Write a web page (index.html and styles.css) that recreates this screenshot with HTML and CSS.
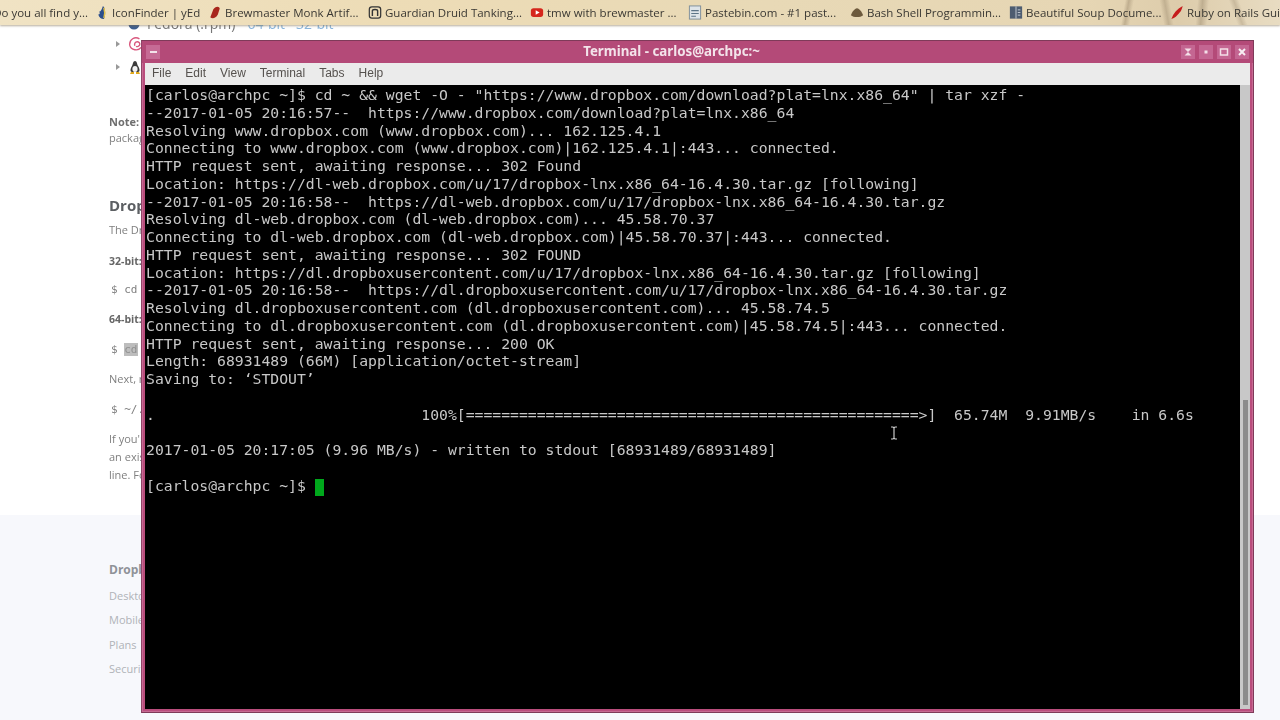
FILE: index.html
```html
<!DOCTYPE html>
<html lang="en">
<head>
<meta charset="utf-8">
<title>Terminal - carlos@archpc:~</title>
<link rel="stylesheet" href="styles.css">
</head>
<body>
<nav class="bookmarks">
  <span class="bm bm-first">Do you all find y...</span>
  <span class="bm bm-icon"><svg class="ico" viewBox="0 0 12 16"><path d="M7 1 C10 3 10 12 8 15 C5 15 3 13 2 10 C4 10 4 9 3 7 C5 7 6 4 7 1Z" fill="#2c4f8c"/><path d="M8 3 C9 6 9 11 8 14" stroke="#e6c44a" stroke-width="1.5" fill="none"/></svg>IconFinder | yEd</span>
  <span class="bm bm-brew"><svg class="ico" viewBox="0 0 14 16"><path d="M2 13 L5 5 C7 1 12 1 12 4 L10 10 C8 14 4 15 2 13Z" fill="#a8261c"/></svg>Brewmaster Monk Artif...</span>
  <span class="bm bm-guard"><svg class="ico" viewBox="0 0 16 16"><rect x="1.5" y="1.5" width="13" height="13" rx="3" fill="none" stroke="#333" stroke-width="1.4"/><path d="M5 12 V6 C5 4 11 4 11 6 V12" fill="none" stroke="#333" stroke-width="1.6"/></svg>Guardian Druid Tanking...</span>
  <span class="bm bm-tmw"><svg class="ico" viewBox="0 0 16 16"><rect x="1" y="3" width="14" height="10" rx="3" fill="#d5261c"/><path d="M6.5 5.5 L11 8 L6.5 10.5Z" fill="#fff"/></svg>tmw with brewmaster ...</span>
  <span class="bm bm-paste"><svg class="ico" viewBox="0 0 14 16"><rect x="1" y="1" width="12" height="14" fill="#dfe5e8" stroke="#7d8d99"/><path d="M3 6 H11 M3 9 H11 M3 12 H8" stroke="#5c7486" stroke-width="1.2"/></svg>Pastebin.com - #1 past...</span>
  <span class="bm bm-bash"><svg class="ico" viewBox="0 0 16 16"><path d="M1 11 C3 6 5 4 8 3 C11 4 13 6 15 11 C12 14 4 14 1 11Z" fill="#6d5a3d"/></svg>Bash Shell Programmin...</span>
  <span class="bm bm-soup"><svg class="ico" viewBox="0 0 16 16"><rect x="1" y="1" width="14" height="14" fill="#4d5c70"/><path d="M8 1 V15" stroke="#cfd5dc"/><path d="M10 5 H13 M10 8 H13 M10 11 H13" stroke="#cfd5dc"/></svg>Beautiful Soup Docume...</span>
  <span class="bm bm-ruby"><svg class="ico" viewBox="0 0 14 16"><path d="M1 15 C3 9 7 4 13 1 C12 6 10 8 9 9 C7 11 5 14 1 15Z" fill="#c51c1c"/></svg>Ruby on Rails Guides</span>
</nav>

<main class="page">
  <div class="article">
    <div class="distro distro-fedora"><svg class="fed-ico" viewBox="0 0 12 12"><circle cx="6" cy="6" r="5.5" fill="#3f5f8f"/></svg><span class="fedora">Fedora (.rpm)</span> <span class="links">64-bit · 32-bit</span></div>
    <div class="tree-row tree-debian"><span class="caret"></span><svg class="swirl" viewBox="0 0 14 14"><path d="M10 2.5 C6 0 1 3 1.5 8 C2.5 12.5 9 13.5 11.5 10 M6 8.5 C5 5.5 8 4 10 6 C11 8 9 10 7 9" fill="none" stroke="#d9587e" stroke-width="1.2"/></svg></div>
    <div class="tree-row tree-linux"><span class="caret"></span><svg class="tux" viewBox="0 0 12 14"><path d="M6 1 C8 1 8 4 9 6 C11 9 11 12 9 12 H3 C1 12 1 9 3 6 C4 4 4 1 6 1Z" fill="#3a3a3a"/><ellipse cx="6" cy="9" rx="2.6" ry="3" fill="#f2f2f2"/><path d="M2 12 H5 V14 H1Z M7 12 H10 L11 14 H7Z" fill="#e0a91c"/></svg></div>
    <p class="note"><b>Note:</b> Updates for the</p>
    <p class="note-2">packages are not</p>
    <h2 class="heading">Dropbox Headless</h2>
    <p class="t t-intro">The Dropbox daemon</p>
    <p class="t t-bit"><b>32-bit:</b></p>
    <p class="t code t-cd">$ cd ~ &amp;&amp; wget</p>
    <p class="t t-bit2"><b>64-bit:</b></p>
    <p class="t code t-cd2">$ <span class="sel">cd</span> ~ &amp;&amp; wget</p>
    <p class="t t-next">Next, run</p>
    <p class="t code t-run">$ ~/.dropbox</p>
    <p class="t t-if">If you're running</p>
    <p class="t t-line">an existing account</p>
    <p class="t t-line">line. Follow</p>
  </div>
  <footer class="foot">
    <h3 class="foot-h">Dropbox</h3>
    <ul class="foot-list">
      <li>Desktop app</li>
      <li>Mobile apps</li>
      <li>Plans</li>
      <li>Security</li>
    </ul>
  </footer>
</main>

<section class="window">
  <header class="titlebar">
    <span class="btn btn-min"><i class="dash"></i></span>
    <span class="title">Terminal - carlos@archpc:~</span>
    <span class="wbtns">
      <span class="btn"><svg viewBox="0 0 10 10"><path d="M1.5 1.5 H8.5 L5 5 L8.5 8.5 H1.5 L5 5Z" fill="#f3dfe8"/></svg></span>
      <span class="btn"><svg viewBox="0 0 10 10"><rect x="3.5" y="3.5" width="3" height="3" fill="#f3dfe8"/></svg></span>
      <span class="btn"><svg viewBox="0 0 10 10"><rect x="1.5" y="2" width="7" height="6" fill="none" stroke="#f3dfe8" stroke-width="1.5"/></svg></span>
      <span class="btn"><svg viewBox="0 0 10 10"><path d="M2 2 L8 8 M8 2 L2 8" stroke="#f8eef3" stroke-width="2"/></svg></span>
    </span>
  </header>
  <div class="menubar">
    <span>File</span><span>Edit</span><span>View</span><span>Terminal</span><span>Tabs</span><span>Help</span>
  </div>
  <div class="termwrap">
<pre class="term">[carlos@archpc ~]$ cd ~ &amp;&amp; wget -O - "https://www.dropbox.com/download?plat=lnx.x86_64" | tar xzf -
--2017-01-05 20:16:57--  https://www.dropbox.com/download?plat=lnx.x86_64
Resolving www.dropbox.com (www.dropbox.com)... 162.125.4.1
Connecting to www.dropbox.com (www.dropbox.com)|162.125.4.1|:443... connected.
HTTP request sent, awaiting response... 302 Found
Location: https://dl-web.dropbox.com/u/17/dropbox-lnx.x86_64-16.4.30.tar.gz [following]
--2017-01-05 20:16:58--  https://dl-web.dropbox.com/u/17/dropbox-lnx.x86_64-16.4.30.tar.gz
Resolving dl-web.dropbox.com (dl-web.dropbox.com)... 45.58.70.37
Connecting to dl-web.dropbox.com (dl-web.dropbox.com)|45.58.70.37|:443... connected.
HTTP request sent, awaiting response... 302 FOUND
Location: https://dl.dropboxusercontent.com/u/17/dropbox-lnx.x86_64-16.4.30.tar.gz [following]
--2017-01-05 20:16:58--  https://dl.dropboxusercontent.com/u/17/dropbox-lnx.x86_64-16.4.30.tar.gz
Resolving dl.dropboxusercontent.com (dl.dropboxusercontent.com)... 45.58.74.5
Connecting to dl.dropboxusercontent.com (dl.dropboxusercontent.com)|45.58.74.5|:443... connected.
HTTP request sent, awaiting response... 200 OK
Length: 68931489 (66M) [application/octet-stream]
Saving to: ‘STDOUT’

.                              100%[===================================================&gt;]  65.74M  9.91MB/s    in 6.6s

2017-01-05 20:17:05 (9.96 MB/s) - written to stdout [68931489/68931489]

[carlos@archpc ~]$ <span class="cursor"> </span></pre>
    <div class="scrollbar"><div class="thumb"></div></div>
    <svg class="ibeam" viewBox="0 0 8 14"><path d="M1 1 H3 L4 2 L5 1 H7 M4 2 V12 M1 13 H3 L4 12 L5 13 H7" fill="none" stroke="#c9c9c9" stroke-width="1.2"/></svg>
  </div>
</section>
</body>
</html>
```

FILE: styles.css
```css
* { box-sizing: border-box; }
html, body { margin: 0; padding: 0; height: 100%; }
body {
  width: 1280px;
  height: 720px;
  overflow: hidden;
  position: relative;
  background: #fff;
  font-family: "Open Sans", "Liberation Sans", sans-serif;
}

/* bookmarks bar */
.bookmarks {
  height: 25px;
  display: flex;
  align-items: center;
  white-space: nowrap;
  overflow: hidden;
  position: relative;
  z-index: 2;
  background:
    linear-gradient(100deg, transparent 87.6%, rgba(140, 122, 95, .4) 87.9%, transparent 88.3%),
    linear-gradient(80deg, transparent 90.6%, rgba(140, 122, 95, .35) 91%, transparent 91.4%),
    linear-gradient(95deg, transparent 93.4%, rgba(140, 122, 95, .4) 93.8%, transparent 94.3%),
    linear-gradient(70deg, transparent 96%, rgba(140, 122, 95, .3) 96.4%, transparent 96.8%),
    linear-gradient(90deg, #f0e3c4 0%, #eddcb6 30%, #e8d9b6 60%, #e6d6b4 85%, #ddccab 92%, #e8dcc2 100%);
  box-shadow: 0 1px 2px rgba(120, 105, 75, .55);
  font-size: 11.5px;
  color: #3a3833;
  filter: blur(.4px);
}
.bm { display: inline-flex; align-items: center; flex: none; }
.ico { width: 14px; height: 15px; margin-right: 3px; flex: none; }
.bm-first { margin-left: -16px; justify-content: flex-end; padding-right: 7px; width: 111px; }
.bm-icon { width: 113px; }
.bm-brew { width: 160px; }
.bm-guard { width: 162px; }
.bm-tmw { width: 158px; }
.bm-paste { width: 162px; }
.bm-bash { width: 159px; }
.bm-soup { width: 161px; }
.bm-ruby { width: 130px; }

/* page behind the window */
.page { height: 695px; display: flex; flex-direction: column; overflow: hidden; filter: blur(.4px); }
.article { height: 490px; padding-left: 109px; color: #7f7f7f; font-size: 11px; position: relative; }
.article p { margin: 0; white-space: nowrap; line-height: 18px; }
.distro { margin-top: -9px; height: 16px; display: flex; align-items: center; font-size: 14px; line-height: 16px; padding-left: 19px; color: #777; white-space: nowrap; }
.fed-ico { width: 12px; height: 12px; margin-right: 7px; }
.links { color: #8ab6dd; margin-left: 12px; }
.tree-row { display: flex; align-items: center; height: 16px; margin-left: 7px; gap: 8px; }
.tree-debian { margin-top: 4px; }
.tree-linux { margin-top: 7px; }
.caret { width: 0; height: 0; border-left: 4px solid #999; border-top: 3px solid transparent; border-bottom: 3px solid transparent; }
.swirl { width: 16px; height: 16px; }
.tux { width: 12px; height: 14px; margin-left: 1px; }
.article .note { margin-top: 39px; line-height: 16px; color: #6f6f6f; }
.article .note-2 { line-height: 16px; }
.heading { margin: 49px 0 0; font-size: 15px; line-height: 20px; color: #5c5f63; font-weight: 700; white-space: nowrap; }
.article .t-intro { margin-top: 6px; }
.article .t-bit { margin-top: 13px; font-size: 10.5px; color: #666; }
.article .code { font-family: "DejaVu Sans Mono", monospace; font-size: 11px; padding-left: 2px; }
.article .t-cd { margin-top: 11px; }
.article .t-bit2 { margin-top: 11px; font-size: 10.5px; color: #666; }
.article .t-cd2 { margin-top: 13px; }
.sel { background: #bdbdbd; color: #8f8f8f; }
.article .t-next { margin-top: 11px; }
.article .t-run { margin-top: 13px; }
.article .t-if { margin-top: 11px; }
.article .t-line { margin-top: 0; }
.foot { flex: 1; background: #f7f8fc; padding: 46px 0 0 109px; color: #b0b3b8; font-size: 11px; }
.foot-h { margin: 0; font-size: 12px; line-height: 18px; font-weight: 700; color: #8f9298; white-space: nowrap; }
.foot-list { list-style: none; margin: 8px 0 0; padding: 0; display: flex; flex-direction: column; gap: 6.3px; }
.foot-list li { line-height: 18px; white-space: nowrap; }

/* terminal window: a window on a free canvas */
.window {
  position: absolute;
  z-index: 3;
  left: 141px;
  top: 40px;
  width: 1113px;
  height: 673px;
  background: #ba4d7d;
  border: 1px solid #7f3a59;
  border-left-color: #8f4669;
  padding: 0 3px 3px 3px;
  display: flex;
  flex-direction: column;
  box-shadow: inset 0 0 0 1px #c66a93;
}
.titlebar {
  height: 22px;
  display: flex;
  align-items: center;
  position: relative;
  background: #b44a78;
  flex: none;
  margin: 0 -3px;
  padding: 0 4px 0 4px;
  filter: blur(.3px);
}
.title {
  flex: 1;
  text-align: center;
  font-family: "Noto Sans", "Open Sans", sans-serif;
  font-size: 13.3px;
  line-height: 20px;
  padding: 0 0 2px 16px;
  font-weight: 700;
  color: #f3e3ea;
}
.btn { width: 14px; height: 14px; background: #c46692; display: inline-flex; align-items: center; justify-content: center; flex: none; }
.btn svg { width: 10px; height: 10px; }
.btn-min { background: #c66b95; margin-right: -14px; }
.dash { width: 7px; height: 2px; background: #f3e3ea; display: block; }
.wbtns { display: flex; gap: 4px; }
.menubar {
  height: 22px;
  flex: none;
  background: #ebebeb;
  display: flex;
  align-items: center;
  gap: 14px;
  padding-left: 7px;
  padding-bottom: 2px;
  font-family: "Liberation Sans", sans-serif;
  font-size: 12px;
  color: #55514e;
  filter: blur(.35px);
}
.termwrap { flex: 1; display: flex; position: relative; background: #000; min-height: 0; }
.term {
  flex: 1;
  margin: 0;
  padding: 1px 0 0 1px;
  background: #000;
  color: #c8c8c8;
  font-family: "DejaVu Sans Mono", monospace;
  font-size: 14.75px;
  line-height: 17.77px;
  letter-spacing: 0;
  overflow: hidden;
  filter: blur(.45px);
}
.cursor { display: inline-block; width: 9px; height: 17px; background: #00a81c; vertical-align: -2px; }
.scrollbar { width: 10px; flex: none; background: #c8c8c8; padding: 315px 2px 4px 3px; display: flex; }
.thumb { flex: 1; background: #8b8b8b; }
.ibeam { position: absolute; left: 745px; top: 341px; width: 8px; height: 14px; }
```
